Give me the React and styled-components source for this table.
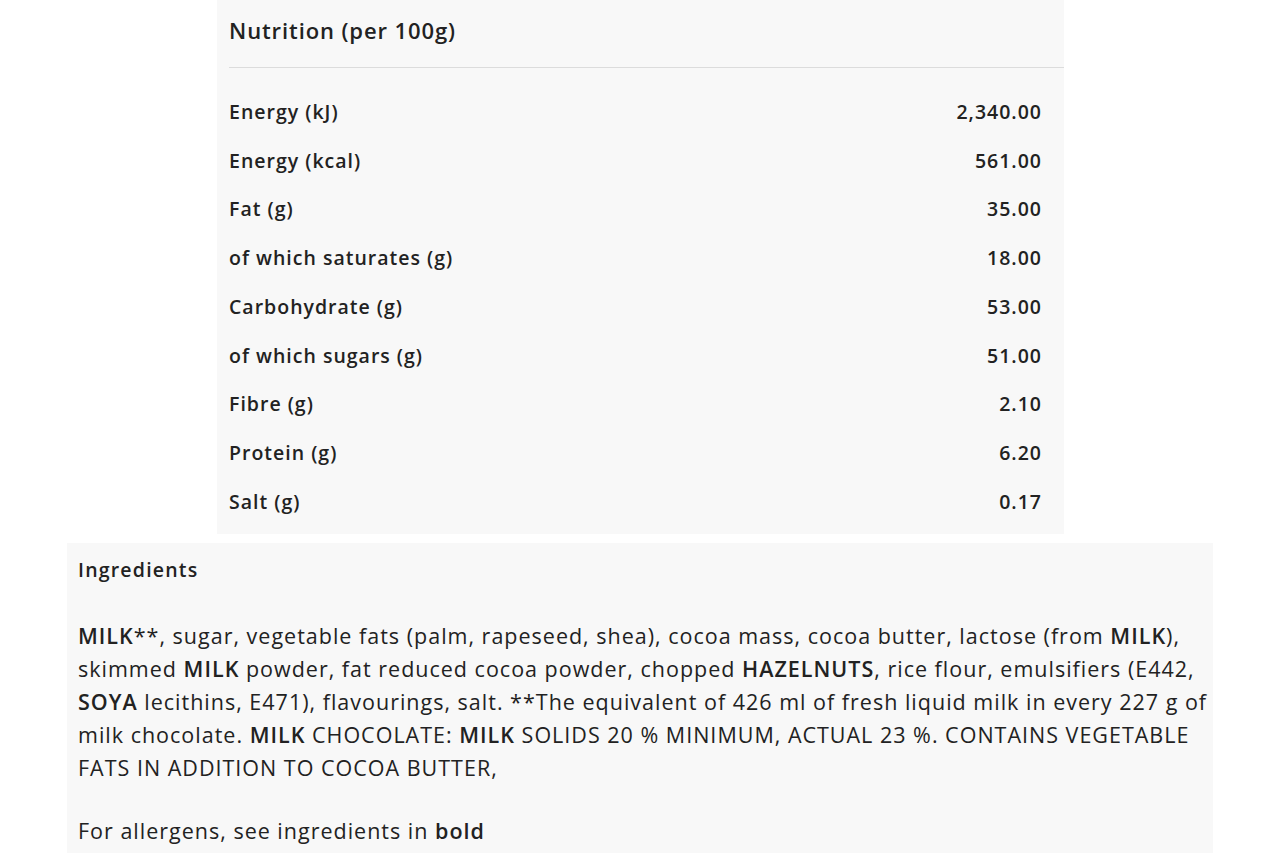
import React from 'react';
import styled, { createGlobalStyle } from 'styled-components';

const GlobalStyle = createGlobalStyle`
  * {
    margin: 0;
    padding: 0;
    box-sizing: border-box;
  }
  body {
    background: #fff;
    font-family: 'Open Sans', 'Liberation Sans', sans-serif;
    color: #222;
  }
`;

const Page = styled.div`
  display: flex;
  flex-direction: column;
  gap: 9px;
`;

const NutritionPanel = styled.section`
  margin-left: 217px;
  width: 847px;
  background: #f8f8f8;
  padding: 0 0 8px 12px;
`;

const PanelTitle = styled.h2`
  font-size: 22px;
  font-weight: 600;
  letter-spacing: 0.9px;
  line-height: 30px;
  padding: 15px 0 22px;
  border-bottom: 1px solid #dcdcdc;
`;

const Table = styled.div`
  display: flex;
  flex-direction: column;
  padding-top: 19px;
`;

const Row = styled.div`
  display: flex;
  justify-content: space-between;
  align-items: center;
  height: 48.75px;
  padding-right: 22px;
  font-size: 19.5px;
  font-weight: 600;
  letter-spacing: 1px;
`;

const IngredientsPanel = styled.section`
  margin-left: 67px;
  width: 1146px;
  background: #f8f8f8;
  padding: 14px 0 20px 11px;
`;

const SubTitle = styled.h3`
  font-size: 19.5px;
  font-weight: 600;
  letter-spacing: 1.2px;
  line-height: 26px;
  margin-bottom: 36px;
`;

const Paragraph = styled.p`
  font-size: 21.5px;
  letter-spacing: 1px;
  line-height: 33px;
  margin-bottom: 30px;

  b {
    font-weight: 600;
  }
`;

const nutrition = [
  ['Energy (kJ)', '2,340.00'],
  ['Energy (kcal)', '561.00'],
  ['Fat (g)', '35.00'],
  ['of which saturates (g)', '18.00'],
  ['Carbohydrate (g)', '53.00'],
  ['of which sugars (g)', '51.00'],
  ['Fibre (g)', '2.10'],
  ['Protein (g)', '6.20'],
  ['Salt (g)', '0.17'],
];

const App = () => {
  return (
    <>
      <GlobalStyle />
      <Page>
        <NutritionPanel>
          <PanelTitle>Nutrition (per 100g)</PanelTitle>
          <Table>
            {nutrition.map(([label, value]) => (
              <Row key={label}>
                <span>{label}</span>
                <span>{value}</span>
              </Row>
            ))}
          </Table>
        </NutritionPanel>
        <IngredientsPanel>
          <SubTitle>Ingredients</SubTitle>
          <Paragraph>
            <b>MILK</b>**, sugar, vegetable fats (palm, rapeseed, shea), cocoa mass, cocoa butter, lactose (from <b>MILK</b>),
            <br />
            skimmed <b>MILK</b> powder, fat reduced cocoa powder, chopped <b>HAZELNUTS</b>, rice flour, emulsifiers (E442,
            <br />
            <b>SOYA</b> lecithins, E471), flavourings, salt. **The equivalent of 426 ml of fresh liquid milk in every 227 g of
            <br />
            milk chocolate. <b>MILK</b> CHOCOLATE: <b>MILK</b> SOLIDS 20 % MINIMUM, ACTUAL 23 %. CONTAINS VEGETABLE
            <br />
            FATS IN ADDITION TO COCOA BUTTER,
          </Paragraph>
          <Paragraph>
            For allergens, see ingredients in <b>bold</b>
          </Paragraph>
        </IngredientsPanel>
      </Page>
    </>
  );
};

export default App;
